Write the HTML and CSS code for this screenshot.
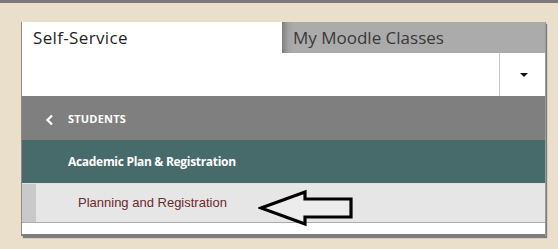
FILE: index.html
```html
<!DOCTYPE html>
<html>
<head>
<meta charset="utf-8">
<link rel="stylesheet" href="styles.css">
</head>
<body>
<div class="topbar"></div>
<div class="panel">
  <div class="tabs">
    <div class="tab tab-active">Self-Service</div>
    <div class="tab tab-inactive">My Moodle Classes</div>
  </div>
  <div class="searchrow">
    <div class="searchfield"></div>
    <div class="dropbtn"><span class="caret"></span></div>
  </div>
  <div class="menu-students">
    <svg class="chev" width="10" height="12" viewBox="0 0 10 12"><polyline points="7,1.5 2.5,6 7,10.5" fill="none" stroke="#fff" stroke-width="2.4"/></svg>
    <span>STUDENTS</span>
  </div>
  <div class="menu-section">Academic Plan &amp; Registration</div>
  <div class="menu-item">
    <div class="strip"></div>
    <div class="item-label">Planning and Registration</div>
    <svg class="pointer" width="98" height="40" viewBox="0 0 98 40">
      <polygon points="3,20 47,4 47,11 93,11 93,29 47,29 47,36" fill="#fff" fill-opacity="0.25" stroke="#000" stroke-width="3.2" stroke-linejoin="miter"/>
    </svg>
  </div>
  <div class="footer"></div>
</div>
</body>
</html>
```
FILE: styles.css
```css
html, body { margin: 0; padding: 0; }
body {
  background: #e9dfcb;
  width: 558px;
  height: 249px;
  overflow: hidden;
  font-family: "Open Sans", "Noto Sans", sans-serif;
}
.topbar { height: 3px; background: #7d7a76; }
.panel {
  width: 523px;
  margin: 19px 0 0 21px;
  background: #fff;
  border-left: 1px solid #8a8a8a;
  box-shadow: 1px 0 0 #9a9a9a, 2px 2px 1px #7d7d7d;
  border-bottom: 2px solid #7f7d7d;
}
.tabs { display: flex; height: 31px; }
.tab {
  font-size: 17px;
  line-height: 31px;
}
.tab-active {
  width: 260px;
  padding-left: 11px;
  color: #1f1f1f;
  background: #fff;
  box-sizing: border-box;
  letter-spacing: 0.35px;
}
.tab-inactive {
  flex: 1;
  padding-left: 11px;
  color: #3a3838;
  letter-spacing: 0;
  background: linear-gradient(to right, #7d7d7d 0, #a2a2a2 6px, #ababab 12px, #ababab 100%);
}
.searchrow { display: flex; height: 43px; }
.searchfield { flex: 1; }
.dropbtn {
  width: 45px;
  border-left: 1px solid #c8c8c8;
  display: flex;
  align-items: center;
  justify-content: center;
}
.caret {
  width: 0; height: 0;
  border-left: 4px solid transparent;
  border-right: 4px solid transparent;
  border-top: 4px solid #111;
  margin-left: 2px;
}
.menu-students {
  height: 44px;
  background: #7f7f7f;
  display: flex;
  align-items: center;
  color: #fff;
  font-weight: 700;
  font-size: 11px;
  letter-spacing: 0.2px;
}
.chev { margin-left: 23px; margin-right: 13px; margin-top: 3px; }
.menu-section {
  height: 44px;
  background: #476b6b;
  color: #fff;
  font-weight: 700;
  font-size: 12px;
  letter-spacing: -0.3px;
  line-height: 43px;
  padding-left: 46px;
  border-bottom: 1px solid #d8e4e8;
  box-sizing: border-box;
}
.menu-item {
  position: relative;
  display: flex;
  height: 39px;
  background: #e6e6e6;
  border-bottom: 1px solid #acacac;
  box-sizing: border-box;
}
.strip { width: 14px; background: #c9c9c9; }
.item-label {
  font-family: "Liberation Sans", Arial, sans-serif;
  font-size: 13px;
  color: #6a2a2a;
  line-height: 38px;
  padding-left: 42px;
}
.pointer { position: absolute; left: 236px; top: 4px; }
.footer { height: 11px; }
```
